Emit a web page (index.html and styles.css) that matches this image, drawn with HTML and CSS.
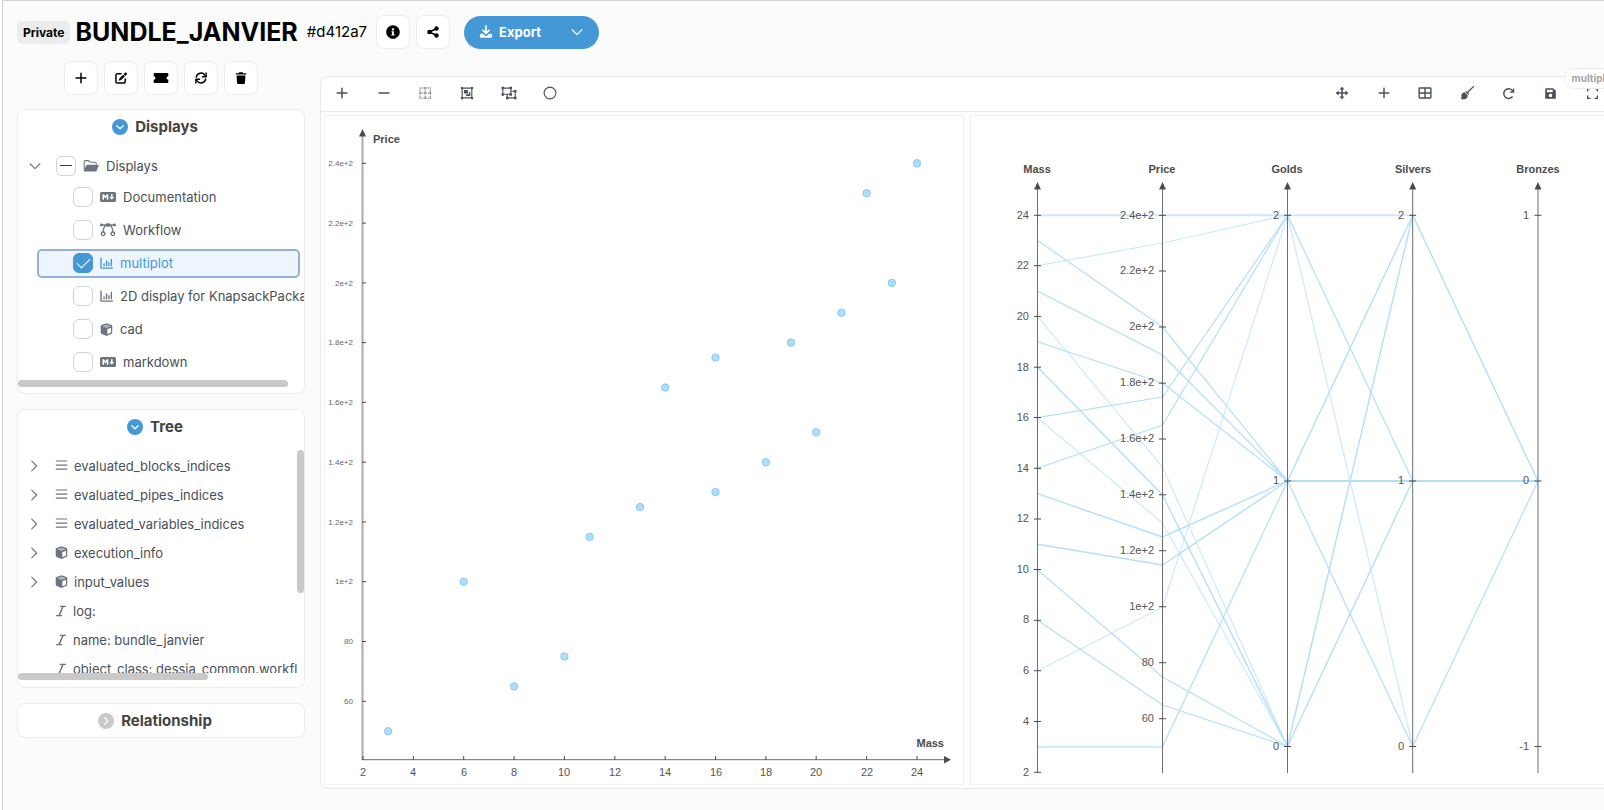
FILE: index.html
```html
<!DOCTYPE html>
<html lang="en">
<head>
<meta charset="utf-8">
<title>BUNDLE_JANVIER</title>
<link rel="stylesheet" href="styles.css">
</head>
<body>
<svg class="sprite" aria-hidden="true">
  <symbol id="plus" viewBox="0 0 16 16"><path d="M8 2.500v11M2.500 8h11" fill="none" stroke="currentColor" stroke-width="1.700" stroke-linecap="round"/></symbol>
  <symbol id="minus" viewBox="0 0 16 16"><path d="M2.500 8h11" fill="none" stroke="currentColor" stroke-width="1.700" stroke-linecap="round"/></symbol>
  <symbol id="edit" viewBox="0 0 16 16"><path d="M8 3.200H3.700a1.500 1.500 0 0 0-1.500 1.500v7.600a1.500 1.500 0 0 0 1.500 1.500h7.600a1.500 1.500 0 0 0 1.500-1.500V9" fill="none" stroke="currentColor" stroke-width="1.700" stroke-linecap="round"/><path d="M11 3.600l1.600-1.500c.6-.5 1.300-.4 1.800.1s.6 1.100.1 1.700L13 5.600zM10.400 4.200l2 2-4.300 4.200-2.700.8.700-2.700z"/></symbol>
  <symbol id="ticket" viewBox="0 0 16 16"><path d="M1.500 3h13q.8 0 .8.800v2.400a1.800 1.800 0 0 0 0 3.600v2.400q0 .8-.8.800h-13q-.8 0-.8-.8V9.800a1.800 1.800 0 0 0 0-3.600V3.800Q.7 3 1.500 3z"/></symbol>
  <symbol id="sync" viewBox="0 0 16 16"><path d="M2.600 7A5.500 5.500 0 0 1 12.500 4.700L13.700 6M13.400 9A5.500 5.500 0 0 1 3.500 11.300L2.300 10" fill="none" stroke="currentColor" stroke-width="1.600" stroke-linecap="round"/><path d="M13.800 2.300v4.200H9.700M2.200 13.700V9.500h4.100" fill="none" stroke="currentColor" stroke-width="1.600" stroke-linecap="round" stroke-linejoin="round"/></symbol>
  <symbol id="trash" viewBox="0 0 16 16"><path d="M6 1.500h4l.6 1h3.400v1.600H2V2.500h3.400zM2.900 5h10.200l-.6 8.600q-.1 1.300-1.400 1.300H4.900q-1.300 0-1.400-1.300z"/></symbol>
  <symbol id="info" viewBox="0 0 512 512"><path d="M256 8C119.043 8 8 119.083 8 256c0 136.997 111.043 248 248 248s248-111.003 248-248C504 119.083 392.957 8 256 8zm0 110c23.196 0 42 18.804 42 42s-18.804 42-42 42-42-18.804-42-42 18.804-42 42-42zm56 254c0 6.627-5.373 12-12 12h-88c-6.627 0-12-5.373-12-12v-24c0-6.627 5.373-12 12-12h12v-64h-12c-6.627 0-12-5.373-12-12v-24c0-6.627 5.373-12 12-12h64c6.627 0 12 5.373 12 12v100h12c6.627 0 12 5.373 12 12v24z"/></symbol>
  <symbol id="share" viewBox="0 0 16 16"><circle cx="4" cy="8" r="2.700"/><circle cx="12" cy="4" r="2.500"/><circle cx="12" cy="12" r="2.500"/><path d="M12 4L4 8l8 4" fill="none" stroke="currentColor" stroke-width="1.600"/></symbol>
  <symbol id="download" viewBox="0 0 16 16"><path d="M8 1v8M4.500 6L8 9.500 11.500 6" fill="none" stroke="currentColor" stroke-width="1.900" stroke-linecap="round" stroke-linejoin="round"/><path fill-rule="evenodd" d="M2.300 10h2.300l2 2q1.400 1.200 2.800 0l2-2h2.300Q15 10 15 11.300v1.900q0 1.300-1.300 1.300H2.300Q1 14.500 1 13.200v-1.900Q1 10 2.300 10zm10.200 1.700v1h1v-1z"/></symbol>
  <symbol id="down" viewBox="0 0 16 16"><path d="M1.500 5L8 11.500 14.500 5" fill="none" stroke="currentColor" stroke-width="1.500" stroke-linecap="round" stroke-linejoin="round"/></symbol>
  <symbol id="right" viewBox="0 0 16 16"><path d="M5 1.500L11.500 8 5 14.500" fill="none" stroke="currentColor" stroke-width="1.500" stroke-linecap="round" stroke-linejoin="round"/></symbol>
  <symbol id="disc-down" viewBox="0 0 16 16"><circle cx="8" cy="8" r="8"/><path d="M4.800 6.700L8 9.800l3.200-3.100" fill="none" stroke="#fff" stroke-width="1.300" stroke-linecap="round" stroke-linejoin="round"/></symbol>
  <symbol id="disc-right" viewBox="0 0 16 16"><circle cx="8" cy="8" r="8"/><path d="M6.800 4.800L9.900 8l-3.100 3.200" fill="none" stroke="#fff" stroke-width="1.300" stroke-linecap="round" stroke-linejoin="round"/></symbol>
  <symbol id="folder" viewBox="0 0 16 16"><path d="M1.200 12V3.800Q1.200 2.600 2.400 2.600h3.200l1.600 1.600h5q1.100 0 1.100 1.100v1.200" fill="none" stroke="currentColor" stroke-width="1.100"/><path d="M4.300 6.800h11q.8 0 .5.700l-2.300 5.400q-.3.700-1.100.7H1.100q-.7 0-.4-.6l2.500-5.600q.3-.6 1.100-.6z"/></symbol>
  <symbol id="md" viewBox="0 0 16 16"><path fill-rule="evenodd" d="M1.500 3h13Q16 3 16 4.500v7q0 1.500-1.500 1.500h-13Q0 13 0 11.500v-7Q0 3 1.500 3zM2.500 5.200v5.600H4V7.700l1.400 1.800 1.400-1.800v3.100h1.500V5.200H6.900L5.400 7.200 3.900 5.200zM11 5.200v2.700H9.400l2.400 2.900 2.400-2.900h-1.600V5.200z"/></symbol>
  <symbol id="flow" viewBox="0 0 16 16"><g fill="none" stroke="currentColor" stroke-width="1.300"><path d="M1 3h14M6 3.500Q3.200 5 3.200 10M10 3.500q2.800 1.500 2.800 6.500"/><circle cx="3.200" cy="11.800" r="1.800"/><circle cx="12.800" cy="11.800" r="1.800"/></g><rect x="6" y="1.200" width="4" height="3.600" rx=".8"/><circle cx="1.400" cy="3" r="1.400"/><circle cx="14.600" cy="3" r="1.400"/></symbol>
  <symbol id="bars" viewBox="0 0 16 16"><path d="M1.200 1.500v11.300q0 .9.900.9H15.200M5 8.500v2.200M8 5v5.700M11 7v3.700M14 3v7.700" fill="none" stroke="currentColor" stroke-width="1.700" stroke-linecap="round"/></symbol>
  <symbol id="cube" viewBox="0 0 16 16"><path d="M8 .6q.4 0 .8.100l5.300 1.900q1 .4 1 1.500v7.700q0 .9-.9 1.400l-5.400 2.400q-.8.300-1.600 0l-5.400-2.400Q.9 12.700.9 11.800V4.100q0-1.100 1-1.500L7.200.7Q7.600.6 8 .6z"/><path d="M3 3.900l5-1.800 5 1.800-5 2zM9 7.600l4.600-1.900v5.900L9 13.700z" fill="#fff"/><path d="M3.600 3.900l4.400-1.500 4.400 1.500-4.400 1.800z" opacity=".6"/></symbol>
  <symbol id="list" viewBox="0 0 16 16"><path d="M1.700 2.500h12.600M1.700 7.500h12.600M1.700 12.500h12.600" fill="none" stroke="currentColor" stroke-width="1.400" stroke-linecap="square"/></symbol>
  <symbol id="italic" viewBox="0 0 16 16"><path d="M6.500 1.800h8M1.500 14.200h8M10.800 1.800L5.400 14.200" fill="none" stroke="currentColor" stroke-width="1.900"/></symbol>
  <symbol id="dotgrid" viewBox="0 0 16 16"><path d="M1.700 2.200h13M1.700 8h13M1.700 13.800h13M2.300 1.600v13M8.200 1.600v13M14 1.600v13" fill="none" stroke="currentColor" stroke-width="1.200" stroke-dasharray="1.200 1.150"/></symbol>
  <symbol id="group" viewBox="0 0 16 16"><path d="M2.500 2.500h11v11h-11z" fill="none" stroke="currentColor" stroke-width="1.300"/><path d="M1 1h2.500v2.500H1zM12.500 1H15v2.500h-2.500zM1 12.500h2.500V15H1zM12.500 12.500H15V15h-2.500zM4.500 4.500H9v4H4.500zM10 7h1.800v4.500H7V9.500h3z"/></symbol>
  <symbol id="ungroup" viewBox="0 0 18 16"><path d="M2 2.500h9v7H2zM11 6h5v7.500H7v-4" fill="none" stroke="currentColor" stroke-width="1.200"/><path d="M.6 1h2.800v2.800H.6zM9.600 1h2.800v2.800H9.600zM.6 8.200h2.800V11H.6zM9.600 8.200h2.800V11H9.600zM14.600 4.600h2.800v2.800h-2.800zM14.600 12.100h2.800v2.800h-2.800zM5.600 12.100h2.800v2.800H5.600z"/></symbol>
  <symbol id="circle" viewBox="0 0 16 16"><circle cx="8" cy="8" r="6.700" fill="none" stroke="currentColor" stroke-width="1.300"/></symbol>
  <symbol id="move" viewBox="0 0 16 16"><path d="M8 2v12M2 8h12" fill="none" stroke="currentColor" stroke-width="1.800"/><path d="M8 .8l2.800 3.300H5.200zM8 15.200l2.800-3.300H5.200zM.8 8l3.300-2.800v5.600zM15.200 8l-3.300-2.800v5.600z"/></symbol>
  <symbol id="table" viewBox="0 0 16 16"><path d="M2.200 2.300h11.600q.9 0 .9.900v9.600q0 .9-.9.900H2.200q-.9 0-.9-.9V3.200q0-.9.900-.9zM8 2.300v11.400M1.300 8h13.400" fill="none" stroke="currentColor" stroke-width="1.600"/></symbol>
  <symbol id="broom" viewBox="0 0 16 16"><path d="M15.300.7L8.800 7.200" fill="none" stroke="currentColor" stroke-width="1.500" stroke-linecap="round"/><path d="M7 5.800l3.400 3.400-1 1L6 6.800zM5.200 7.200l3.800 3.800q-.4 3.200-3.200 4H.6l1.700-1.600-1.500.1 1.500-1.700-.9-.1Q1.700 8 5.200 7.200z"/></symbol>
  <symbol id="redo" viewBox="0 0 16 16"><path d="M13.600 5.500A6 6 0 1 0 13 11.700" fill="none" stroke="currentColor" stroke-width="1.800"/><path d="M15 1.300v5.700H9.300l1.700-1.700h2.300v-2.300z"/></symbol>
  <symbol id="save" viewBox="0 0 16 16"><path fill-rule="evenodd" d="M2.600 1.500h8.700l3.200 3.200v8.700q0 1.100-1.100 1.100H2.600q-1.100 0-1.100-1.100V2.600q0-1.100 1.100-1.100zM3.500 3.400v3h7.200v-3zM8 8.300a2.200 2.200 0 1 0 0 4.400 2.200 2.200 0 0 0 0-4.400z"/></symbol>
  <symbol id="expand" viewBox="0 0 16 16"><path d="M2 5.500V2h3.500M10.500 2H14v3.500M14 10.500V14h-3.500M5.500 14H2v-3.500" fill="none" stroke="currentColor" stroke-width="1.700"/></symbol>
</svg>

<div class="page">
  <header class="header">
    <span class="badge">Private</span>
    <h1 class="title">BUNDLE_JANVIER</h1>
    <span class="ref">#d412a7</span>
    <div class="header-tools">
      <button class="square" aria-label="Information"><svg class="i14"><use href="#info"/></svg></button>
      <button class="square" aria-label="Share"><svg class="i14"><use href="#share"/></svg></button>
    </div>
    <div class="export">
      <button class="export-main"><svg class="i14"><use href="#download"/></svg>Export</button>
      <button class="export-more" aria-label="Export options"><svg class="i12"><use href="#down"/></svg></button>
    </div>
  </header>

  <div class="columns">
    <aside class="side">
      <div class="actions">
        <button class="square" aria-label="Add"><svg class="i14"><use href="#plus"/></svg></button>
        <button class="square" aria-label="Edit"><svg class="i14"><use href="#edit"/></svg></button>
        <button class="square" aria-label="Ticket"><svg class="i16"><use href="#ticket"/></svg></button>
        <button class="square" aria-label="Refresh"><svg class="i14"><use href="#sync"/></svg></button>
        <button class="square" aria-label="Delete"><svg class="i14"><use href="#trash"/></svg></button>
      </div>

      <section class="card">
        <button class="card-head"><svg class="i16 blue"><use href="#disc-down"/></svg>Displays</button>
        <div class="displays">
          <div class="root">
            <button class="toggle" aria-label="Collapse"><svg class="i12"><use href="#down"/></svg></button>
            <label class="pick"><input type="checkbox" class="partial"><svg class="i16"><use href="#folder"/></svg>Displays</label>
          </div>
          <ul class="options">
            <li class="option"><label class="pick"><input type="checkbox"><svg class="i16"><use href="#md"/></svg>Documentation</label></li>
            <li class="option"><label class="pick"><input type="checkbox"><svg class="i16"><use href="#flow"/></svg>Workflow</label></li>
            <li class="option selected"><label class="pick"><input type="checkbox" checked><svg class="i13"><use href="#bars"/></svg>multiplot</label></li>
            <li class="option"><label class="pick"><input type="checkbox"><svg class="i13"><use href="#bars"/></svg>2D display for KnapsackPackage</label></li>
            <li class="option"><label class="pick"><input type="checkbox"><svg class="i13"><use href="#cube"/></svg>cad</label></li>
            <li class="option"><label class="pick"><input type="checkbox"><svg class="i16"><use href="#md"/></svg>markdown</label></li>
          </ul>
        </div>
        <div class="hbar"><div class="thumb wide"></div></div>
      </section>

      <section class="card">
        <button class="card-head"><svg class="i16 blue"><use href="#disc-down"/></svg>Tree</button>
        <div class="tree">
          <ul class="nodes">
            <li class="node"><button class="toggle" aria-label="Expand"><svg class="i12"><use href="#right"/></svg></button><svg class="i13"><use href="#list"/></svg>evaluated_blocks_indices</li>
            <li class="node"><button class="toggle" aria-label="Expand"><svg class="i12"><use href="#right"/></svg></button><svg class="i13"><use href="#list"/></svg>evaluated_pipes_indices</li>
            <li class="node"><button class="toggle" aria-label="Expand"><svg class="i12"><use href="#right"/></svg></button><svg class="i13"><use href="#list"/></svg>evaluated_variables_indices</li>
            <li class="node"><button class="toggle" aria-label="Expand"><svg class="i12"><use href="#right"/></svg></button><svg class="i13"><use href="#cube"/></svg>execution_info</li>
            <li class="node"><button class="toggle" aria-label="Expand"><svg class="i12"><use href="#right"/></svg></button><svg class="i13"><use href="#cube"/></svg>input_values</li>
            <li class="node leaf"><svg class="i12"><use href="#italic"/></svg>log:</li>
            <li class="node leaf"><svg class="i12"><use href="#italic"/></svg>name: bundle_janvier</li>
            <li class="node leaf"><svg class="i12"><use href="#italic"/></svg>object_class: dessia_common.workflow</li>
          </ul>
          <div class="vbar"></div>
        </div>
        <div class="hbar"><div class="thumb"></div></div>
      </section>

      <section class="card">
        <button class="card-head"><svg class="i16 gray"><use href="#disc-right"/></svg>Relationship</button>
      </section>
    </aside>

    <main class="board">
      <span class="tag">multiplot</span>
      <div class="toolbar">
        <div class="tools left">
          <button class="tool" aria-label="Zoom in"><svg class="i14"><use href="#plus"/></svg></button>
          <button class="tool" aria-label="Zoom out"><svg class="i14"><use href="#minus"/></svg></button>
          <button class="tool" aria-label="Grid"><svg class="i14"><use href="#dotgrid"/></svg></button>
          <button class="tool" aria-label="Group"><svg class="i14"><use href="#group"/></svg></button>
          <button class="tool" aria-label="Ungroup"><svg class="i16"><use href="#ungroup"/></svg></button>
          <button class="tool" aria-label="Circle"><svg class="i14"><use href="#circle"/></svg></button>
        </div>
        <div class="tools right">
          <button class="tool" aria-label="Move"><svg class="i14"><use href="#move"/></svg></button>
          <button class="tool" aria-label="Add plot"><svg class="i14"><use href="#plus"/></svg></button>
          <button class="tool" aria-label="Table"><svg class="i14"><use href="#table"/></svg></button>
          <button class="tool" aria-label="Clean"><svg class="i14"><use href="#broom"/></svg></button>
          <button class="tool" aria-label="Reset"><svg class="i13"><use href="#redo"/></svg></button>
          <button class="tool" aria-label="Save"><svg class="i13"><use href="#save"/></svg></button>
          <button class="tool" aria-label="Full screen"><svg class="i13"><use href="#expand"/></svg></button>
        </div>
      </div>
      <div class="plots">
        <svg class="plot" viewBox="325 116 638 668" role="img" aria-label="Price against mass">
          <path class="soft-axis" d="M362.500 136V760"/>
          <path class="axis" d="M362 759.700H945"/>
          <path class="tip" d="M362.500 129l3.500 7.500h-7zM951 759.700l-7-3.700v7.400z"/>
          <path class="tick" d="M362 163.300h4M362 223.100h4M362 282.900h4M362 342.600h4M362 402.400h4M362 462.200h4M362 522h4M362 581.700h4M362 641.500h4M362 701.300h4"/>
          <path class="tick" d="M363 760v-4M413.400 760v-4M463.700 760v-4M514.100 760v-4M564.400 760v-4M614.800 760v-4M665.200 760v-4M715.500 760v-4M765.900 760v-4M816.200 760v-4M866.600 760v-4M917 760v-4"/>
          <text class="name" x="373" y="143">Price</text>
          <text class="name end" x="944" y="747">Mass</text>
          <g class="small end">
            <text x="353" y="166">2.4e+2</text><text x="353" y="226">2.2e+2</text><text x="353" y="286">2e+2</text><text x="353" y="345">1.8e+2</text><text x="353" y="405">1.6e+2</text><text x="353" y="465">1.4e+2</text><text x="353" y="525">1.2e+2</text><text x="353" y="584">1e+2</text><text x="353" y="644">80</text><text x="353" y="704">60</text>
          </g>
          <g class="value mid">
            <text x="363" y="776">2</text><text x="413" y="776">4</text><text x="464" y="776">6</text><text x="514" y="776">8</text><text x="564" y="776">10</text><text x="615" y="776">12</text><text x="665" y="776">14</text><text x="716" y="776">16</text><text x="766" y="776">18</text><text x="816" y="776">20</text><text x="867" y="776">22</text><text x="917" y="776">24</text>
          </g>
          <g class="dots">
            <circle cx="917" cy="163.300" r="3.700"/><circle cx="866.600" cy="193.200" r="3.700"/><circle cx="891.800" cy="282.900" r="3.700"/><circle cx="841.400" cy="312.700" r="3.700"/><circle cx="791" cy="342.600" r="3.700"/><circle cx="715.500" cy="357.600" r="3.700"/><circle cx="665.200" cy="387.500" r="3.700"/><circle cx="816.200" cy="432.300" r="3.700"/><circle cx="765.900" cy="462.200" r="3.700"/><circle cx="715.500" cy="492.100" r="3.700"/><circle cx="640" cy="507" r="3.700"/><circle cx="589.600" cy="536.900" r="3.700"/><circle cx="463.700" cy="581.700" r="3.700"/><circle cx="564.400" cy="656.500" r="3.700"/><circle cx="514.100" cy="686.400" r="3.700"/><circle cx="388.200" cy="731.200" r="3.700"/>
          </g>
        </svg>
        <svg class="plot" viewBox="971 116 638 668" role="img" aria-label="Parallel coordinates of mass, price, golds, silvers and bronzes">
          <g class="faint">
            <path d="M1037.500 265.700L1162.500 243L1287.500 215.300"/>
            <path d="M1037.500 316.400L1162.500 467L1287.500 746.500"/>
            <path d="M1037.500 417.700L1162.500 523L1287.500 746.500"/>
            <path d="M1037.500 671L1162.500 607L1287.500 215.300"/>
            <path d="M1287.500 215.300L1412.700 746.500"/>
          </g>
          <g class="line">
            <path d="M1037.500 240.400L1162.500 327L1287.500 481"/>
            <path d="M1037.500 341.700L1162.500 383L1287.500 481"/>
            <path d="M1037.500 417.700L1162.500 397L1287.500 215.300"/>
            <path d="M1037.500 468.300L1162.500 425L1287.500 215.300"/>
            <path d="M1037.500 569.700L1162.500 677L1287.500 746.500"/>
            <path d="M1037.500 620.300L1162.500 705L1287.500 746.500"/>
            <path d="M1037.500 746.800H1162.500L1287.500 481"/>
            <path d="M1287.500 215.300L1412.700 481"/>
            <path d="M1287.500 481L1412.700 746.500"/>
            <path d="M1412.700 746.500L1538 481"/>
          </g>
          <g class="strong">
            <path d="M1037.500 291L1162.500 355L1287.500 481"/>
            <path d="M1037.500 367L1162.500 495L1287.500 746.500"/>
            <path d="M1037.500 493.700L1162.500 537L1287.500 481"/>
            <path d="M1037.500 544.300L1162.500 565L1287.500 481"/>
            <path d="M1287.500 481L1412.700 215.300L1538 481"/>
            <path d="M1287.500 746.500L1412.700 215.300"/>
            <path d="M1287.500 746.500L1412.700 481"/>
          </g>
          <path class="wide-soft" d="M1037.500 215.300H1412.700"/>
          <path class="wide-line" d="M1287.500 481H1538"/>
          <path class="axis" d="M1037.500 188V773M1162.500 188V773M1287.500 188V773M1412.700 188V773M1538 188V773"/>
          <path class="tip" d="M1037.500 182l3.500 7.500h-7zM1162.500 182l3.500 7.500h-7zM1287.500 182l3.500 7.500h-7zM1412.700 182l3.500 7.500h-7zM1538 182l3.500 7.500h-7z"/>
          <path class="tick" d="M1034 215.300h7M1034 265.700h7M1034 316.400h7M1034 367.200h7M1034 417.500h7M1034 468.300h7M1034 519h7M1034 569.500h7M1034 620.300h7M1034 670.700h7M1034 721.500h7M1034 772.300h7"/>
          <path class="tick" d="M1159 215.300h7M1159 271h7M1159 327h7M1159 383.200h7M1159 439h7M1159 494.800h7M1159 550.700h7M1159 606.700h7M1159 662.700h7M1159 718.700h7"/>
          <path class="tick" d="M1284 215.300h7M1284 481h7M1284 746.500h7M1409.200 215.300h7M1409.200 481h7M1409.200 746.500h7M1534.500 215.300h7M1534.500 481h7M1534.500 746.500h7"/>
          <g class="name mid">
            <text x="1037" y="173">Mass</text><text x="1162" y="173">Price</text><text x="1287" y="173">Golds</text><text x="1413" y="173">Silvers</text><text x="1538" y="173">Bronzes</text>
          </g>
          <g class="value end">
            <text x="1029" y="219">24</text><text x="1029" y="269">22</text><text x="1029" y="320">20</text><text x="1029" y="371">18</text><text x="1029" y="421">16</text><text x="1029" y="472">14</text><text x="1029" y="522">12</text><text x="1029" y="573">10</text><text x="1029" y="623">8</text><text x="1029" y="674">6</text><text x="1029" y="725">4</text><text x="1029" y="776">2</text>
            <text x="1154" y="219">2.4e+2</text><text x="1154" y="274">2.2e+2</text><text x="1154" y="330">2e+2</text><text x="1154" y="386">1.8e+2</text><text x="1154" y="442">1.6e+2</text><text x="1154" y="498">1.4e+2</text><text x="1154" y="554">1.2e+2</text><text x="1154" y="610">1e+2</text><text x="1154" y="666">80</text><text x="1154" y="722">60</text>
            <text x="1279" y="219">2</text><text x="1279" y="484">1</text><text x="1279" y="750">0</text>
            <text x="1404" y="219">2</text><text x="1404" y="484">1</text><text x="1404" y="750">0</text>
            <text x="1529" y="219">1</text><text x="1529" y="484">0</text><text x="1529" y="750">-1</text>
          </g>
        </svg>
      </div>
    </main>
  </div>
</div>
</body>
</html>
```
FILE: styles.css
```css
* { box-sizing: border-box; }

body {
  margin: 0;
  min-height: 100vh;
  overflow: hidden;
  background: #fff;
  color: #495057;
  font-family: Inter, "Noto Sans", sans-serif;
  font-size: 13px;
  line-height: 20px;
}

button {
  padding: 0;
  border: 0;
  background: none;
  color: inherit;
  font: inherit;
  cursor: pointer;
}

ul { margin: 0; padding: 0; list-style: none; }

svg { flex: none; fill: currentColor; }
.sprite { position: absolute; width: 0; height: 0; }
.i12 { width: 12px; height: 12px; }
.i13 { width: 13px; height: 13px; }
.i14 { width: 14px; height: 14px; }
.i16 { width: 16px; height: 16px; }
.blue { color: #4398d5; }
.gray { color: #c9c9c9; }

.page {
  min-height: 100vh;
  margin-left: 2px;
  padding: 14px 0 0 14px;
  border-top: 1px solid #d4d4d4;
  border-left: 1px solid #d0d0d0;
  background: #fbfbfb;
}

/* Header */
.header {
  display: flex;
  align-items: center;
  height: 34px;
  color: #000;
}
.badge {
  padding: 1px 6px;
  border-radius: 5px;
  background: #ececec;
  font-size: 12px;
  font-weight: 700;
  line-height: 21px;
}
.title {
  margin: 0 0 0 5px;
  font-size: 25px;
  font-weight: 700;
  line-height: 34px;
}
.ref { margin-left: 9px; font-size: 15px; }
.header-tools { display: flex; gap: 6px; margin-left: 9px; }
.square {
  display: flex;
  align-items: center;
  justify-content: center;
  width: 34px;
  height: 34px;
  border: 1px solid #ececec;
  border-radius: 8px;
  background: #fff;
  color: #000;
}
.export {
  display: flex;
  height: 33px;
  margin-left: 14px;
  border-radius: 17px;
  background: #4398d5;
  color: #fff;
}
.export-main {
  display: flex;
  align-items: center;
  gap: 6px;
  padding: 0 14px 0 15px;
  font-weight: 700;
}
.export-more {
  display: flex;
  align-items: center;
  justify-content: center;
  width: 44px;
}

/* Sidebar */
.columns {
  display: grid;
  grid-template-columns: 288px 1fr;
  gap: 15px;
  align-items: start;
}
.side { display: grid; gap: 15px; padding-top: 12px; }
.actions { display: flex; justify-content: center; gap: 6px; height: 33px; }
.card {
  min-width: 0;
  overflow: hidden;
  border: 1px solid #ececec;
  border-radius: 8px;
  background: #fff;
}
.card-head {
  display: flex;
  align-items: center;
  justify-content: center;
  gap: 7px;
  width: 100%;
  height: 33px;
  padding-right: 12px;
  color: #434343;
  font-size: 15px;
  font-weight: 700;
}
.displays { padding-top: 9px; white-space: nowrap; }
.root, .node { display: flex; align-items: center; }
.root { height: 27px; margin-bottom: 4px; padding-left: 11px; }
.toggle { display: flex; width: 12px; color: #6c757d; }
.root .toggle { margin-right: 15px; }
.pick { display: flex; align-items: center; gap: 7px; }
.pick svg, .node > svg { color: #6c757d; }
.pick input {
  display: grid;
  place-items: center;
  flex: none;
  appearance: none;
  width: 20px;
  height: 20px;
  margin: 0;
  border: 1px solid #ced4da;
  border-radius: 6px;
  background: #fff;
}
.pick input:checked { border-color: #4398d5; background: #4398d5; }
.pick input:checked::before {
  content: "";
  width: 12px;
  height: 6px;
  margin-bottom: 4px;
  border: solid #fff;
  border-width: 0 0 1px 1px;
  rotate: -45deg;
}
.partial::before { content: ""; width: 12px; height: 1px; background: #343a40; }
.options { display: grid; grid-template-columns: minmax(0, 1fr); gap: 4px; }
.option {
  height: 29px;
  margin: 0 4px 0 19px;
  padding: 2px 0 0 34px;
  border: 2px solid transparent;
  border-radius: 5px;
}
.selected { border-color: #94b1d9; background: #eff5ff; }
.selected .pick, .selected svg { color: #4398d5; }
.hbar { margin: 3px 0 6px; }
.thumb { width: 190px; height: 7px; border-radius: 4px; background: #c9c9c9; }
.wide { width: 270px; }

.tree {
  display: grid;
  grid-template-columns: minmax(0, 1fr) 7px;
  height: 223px;
  margin-top: 7px;
}
.tree + .hbar { margin: 0 0 7px; }
.nodes { overflow: hidden; padding-top: 1px; white-space: nowrap; }
.node { gap: 6px; height: 29px; padding-left: 10px; }
.node .toggle { margin-right: 9px; }
.leaf { padding-left: 37px; }
.vbar { height: 143px; border-radius: 4px; background: #c9c9c9; }

/* Plot board */
.board {
  position: relative;
  margin: 27px -10px 0 0;
  border: 1px solid #e9e9e9;
  border-radius: 8px;
  background: #fff;
}
.tag {
  position: absolute;
  top: -9px;
  right: -10px;
  padding: 0 7px;
  border: 1px solid #ececec;
  border-radius: 11px;
  background: #fff;
  color: #a6a6a6;
  font-size: 10px;
  font-weight: 700;
  line-height: 19px;
}
.toolbar {
  display: flex;
  justify-content: space-between;
  height: 35px;
  padding-bottom: 2px;
  border-bottom: 1px solid #e9e9e9;
}
.tools { display: flex; }
.left { width: 250px; }
.right { width: 292px; }
.tool {
  display: flex;
  flex: 1;
  align-items: center;
  justify-content: center;
}
.plots {
  display: grid;
  grid-template-columns: 1fr 1fr;
  gap: 6px;
  padding: 3px;
}
.plot { display: block; width: 100%; border: 1px solid #f1f1f1; }

.plot text { font-family: "Liberation Sans", Arial, sans-serif; }
.name { fill: #4c4c4c; font-size: 11px; font-weight: 700; }
.value { fill: #555; font-size: 11px; }
.small { fill: #666; font-size: 8px; }
.end { text-anchor: end; }
.mid { text-anchor: middle; }
.soft-axis { fill: none; stroke: #ababab; stroke-width: 2; }
.axis { fill: none; stroke: #6d6d6d; stroke-width: 1; }
.tick { fill: none; stroke: #4c4c4c; stroke-width: 1; }
.tip { fill: #4c4c4c; }
.dots { fill: #b0defa; stroke: #84ccf8; stroke-width: 1; }
.faint, .line, .strong { fill: none; stroke: #b4dffb; stroke-width: 1.2; }
.faint { opacity: .65; }
.strong { stroke-width: 1.4; }
.wide-line { stroke: #b4dffb; stroke-width: 2; }
.wide-soft { stroke: #cdeafd; stroke-width: 2; }
```
